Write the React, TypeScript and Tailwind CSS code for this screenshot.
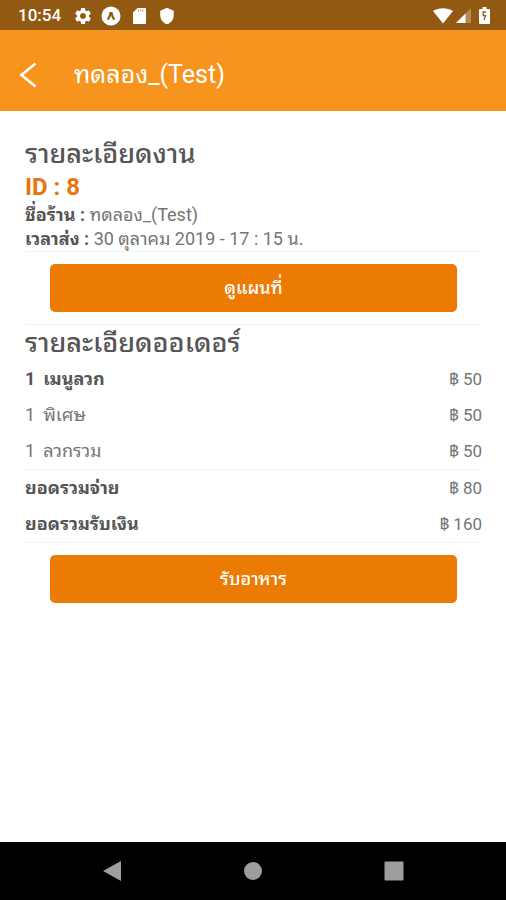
import React from 'react'
import { MdSettings, MdShield } from 'react-icons/md'

const items = [
  { qty: 1, name: 'เมนูลวก', price: 50, main: true },
  { qty: 1, name: 'พิเศษ', price: 50, main: false },
  { qty: 1, name: 'ลวกรวม', price: 50, main: false },
]

const totals = [
  { label: 'ยอดรวมจ่าย', amount: 80 },
  { label: 'ยอดรวมรับเงิน', amount: 160 },
]

function StatusBar() {
  return (
    <div className="flex h-[30px] items-center justify-between bg-[#925912] pl-[18px] pr-4 pt-px text-white">
      <div className="flex items-center">
        <span className="text-[17px] font-medium">10:54</span>
        <MdSettings className="ml-3 size-5" />
        <svg className="ml-2 size-5" viewBox="0 0 20 20">
          <circle cx="10" cy="10" r="9.5" fill="#fff" />
          <path d="M5.8 12.9 C7.2 11 8 8.6 8.5 6 H11.5 C12 8.6 12.8 11 14.2 12.9 L12.6 14.2 C11.5 13 10.8 11.4 10 9.4 C9.2 11.4 8.5 13 7.4 14.2 Z" fill="#925912" />
        </svg>
        {/* sd card */}
        <svg className="ml-3 h-4 w-[13px]" viewBox="0 0 13 16">
          <path d="M4.6 0 H12 Q13 0 13 1 V15 Q13 16 12 16 H1 Q0 16 0 15 V4.6 Z" fill="#fff" />
          <path d="M5.5 1.5 V3.5 M7.8 1.5 V3.5 M10 1.5 V3.5" stroke="#925912" strokeOpacity="0.6" />
        </svg>
        <MdShield className="ml-3 size-[18px]" />
      </div>
      <div className="flex items-center">
        <svg className="h-4 w-5" viewBox="0 0 20 16">
          <path d="M0 3 C6 -0.8 14 -0.8 20 3 L10 15.5 Z" fill="#fff" />
        </svg>
        <svg className="ml-[3px] size-[15px]" viewBox="0 0 15 15">
          <path d="M15 0 V15 H0 Z" fill="#fff" opacity="0.3" />
          <path d="M9.5 5.5 V15 H0 Z" fill="#fff" />
        </svg>
        <svg className="ml-2 h-[17px] w-[11px]" viewBox="0 0 11 17">
          <path d="M3.5 0 H7.5 V2 H10 Q11 2 11 3 V16 Q11 17 10 17 H1 Q0 17 0 16 V3 Q0 2 1 2 H3.5 Z" fill="#fff" />
          <path d="M7 5 H4.2 V8.6 H6.6 L5 13" fill="none" stroke="#925912" strokeWidth="1.3" />
        </svg>
      </div>
    </div>
  )
}

function NavBar() {
  return (
    <nav className="flex h-[58px] items-center justify-around bg-black px-[42px] text-[#9e9e9e]">
      <button aria-label="Back">
        <svg className="size-5" viewBox="0 0 20 20">
          <path d="M1 10 L19 0 V20 Z" fill="currentColor" />
        </svg>
      </button>
      <button aria-label="Home">
        <svg className="size-5" viewBox="0 0 20 20">
          <circle cx="10" cy="10" r="9" fill="currentColor" />
        </svg>
      </button>
      <button aria-label="Recent">
        <svg className="size-5" viewBox="0 0 20 20">
          <rect x="0.5" y="0.5" width="19" height="19" rx="1" fill="currentColor" />
        </svg>
      </button>
    </nav>
  )
}

function ActionButton({ children }: { children: React.ReactNode }) {
  return (
    <div className="px-[25px] py-3">
      <button className="h-12 w-full rounded-[5px] bg-[#eb7b03] text-lg font-medium text-white">{children}</button>
    </div>
  )
}

export default function App() {
  return (
    <div className="flex min-h-screen flex-col bg-white font-['Roboto','Noto_Sans_Thai_Looped','Noto_Looped_Thai','Loma','Waree','Garuda','Noto_Sans_Thai',sans-serif] text-[#757575]">
      <StatusBar />
      <header className="flex h-[81px] items-center bg-[#f7941d] pl-[18px] pt-2 text-white">
        <button aria-label="Back">
          <svg className="h-[26px] w-5" viewBox="0 0 20 26" fill="none" stroke="currentColor" strokeWidth="2.6">
            <path d="M17.5 1.5 L3.5 13 L17.5 24.5" />
          </svg>
        </button>
        <h1 className="ml-9 text-[25px]">ทดลอง_(Test)</h1>
      </header>

      <main className="flex-1 pl-[25px] pr-6 pt-[27px]">
        <section className="border-b border-[#f4f4f4]">
          <h2 className="text-[27px] leading-[33px] font-medium text-[#555]">รายละเอียดงาน</h2>
          <p className="text-2xl leading-8 font-bold text-[#e8750e]">ID : 8</p>
          <p className="text-lg leading-6">
            <b className="font-bold text-[#555]">ชื่อร้าน :</b> ทดลอง_(Test)
          </p>
          <p className="text-lg leading-6">
            <b className="font-bold text-[#555]">เวลาส่ง :</b> 30 ตุลาคม 2019 - 17 : 15 น.
          </p>
        </section>

        <div className="border-b border-[#f4f4f4]">
          <ActionButton>ดูแผนที่</ActionButton>
        </div>

        <section>
          <h2 className="text-[27px] leading-9 font-medium text-[#555]">รายละเอียดออเดอร์</h2>
          <ul className="border-b border-[#f4f4f4] text-lg leading-9">
            {items.map(item => (
              <li key={item.name} className="flex justify-between">
                <span className={item.main ? 'font-bold text-[#555]' : ''}>
                  <span className="mr-2">{item.qty}</span>
                  {item.name}
                </span>
                <span className="text-[17px]">฿ {item.price}</span>
              </li>
            ))}
          </ul>
          <ul className="border-b border-[#f4f4f4] text-lg leading-9">
            {totals.map(total => (
              <li key={total.label} className="flex justify-between">
                <b className="font-bold text-[#555]">{total.label}</b>
                <span className="text-[17px]">฿ {total.amount}</span>
              </li>
            ))}
          </ul>
        </section>

        <ActionButton>รับอาหาร</ActionButton>
      </main>

      <NavBar />
    </div>
  )
}
